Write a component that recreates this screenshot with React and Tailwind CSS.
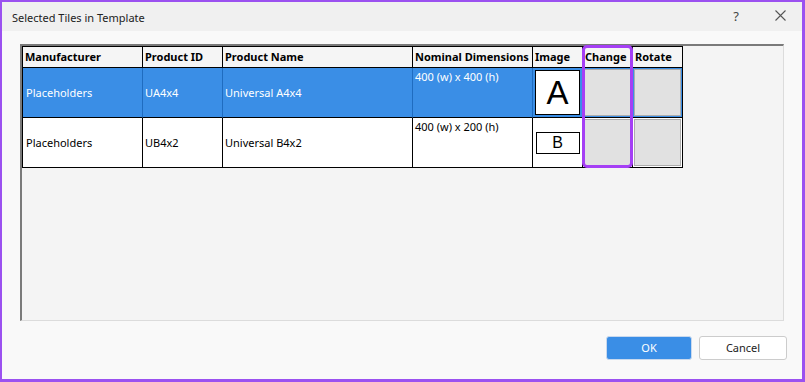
import React from "react";

const cols = [
  { key: "m", label: "Manufacturer", w: "w-[120px]" },
  { key: "p", label: "Product ID", w: "w-[80px]" },
  { key: "n", label: "Product Name", w: "w-[190px]" },
  { key: "d", label: "Nominal Dimensions", w: "w-[120px]" },
  { key: "i", label: "Image", w: "w-[50px]" },
  { key: "c", label: "Change", w: "w-[50px]" },
  { key: "r", label: "Rotate", w: "w-[50px]" },
];

const rows = [
  { m: "Placeholders", p: "UA4x4", n: "Universal A4x4", d: "400 (w) x 400 (h)", img: "A", sel: true },
  { m: "Placeholders", p: "UB4x2", n: "Universal B4x2", d: "400 (w) x 200 (h)", img: "B", sel: false },
];

function Row({ r }) {
  const sep = r.sel ? "border-r-[#1f6cc0]" : "border-r-black";
  const bg = r.sel ? "bg-[#3a8ee6] text-white" : "bg-white text-black";
  const cell = `h-[50px] border-r border-b border-b-black ${sep} shrink-0`;
  return (
    <div className={`flex ${bg}`}>
      <div className={`${cell} w-[120px] flex items-center pl-[3px]`}>{r.m}</div>
      <div className={`${cell} w-[80px] flex items-center pl-[2px]`}>{r.p}</div>
      <div className={`${cell} w-[190px] flex items-center pl-[2px]`}>{r.n}</div>
      <div className={`${cell} w-[120px] pl-[2px] pt-[1px]`}>{r.d}</div>
      <div className={`${cell} w-[50px] flex items-center justify-center`}>
        {r.img === "A" ? (
          <div className="w-[45px] h-[45px] bg-white border border-black flex items-center justify-center text-black text-[33px] leading-none font-['Liberation_Sans',Arial,sans-serif]">
            A
          </div>
        ) : (
          <div className="w-[44px] h-[22px] bg-white border border-black flex items-center justify-center text-black text-[16px] leading-none font-['Liberation_Sans',Arial,sans-serif]">
            B
          </div>
        )}
      </div>
      <div className={`${cell} w-[50px] p-[1px]`}>
        <div className="w-full h-full bg-[#e1e1e1] border border-[#adadad]" />
      </div>
      <div className={`h-[50px] border-r border-b border-black shrink-0 w-[50px] p-[1px]`}>
        <div className="w-full h-full bg-[#e1e1e1] border border-[#adadad]" />
      </div>
    </div>
  );
}

export default function App() {
  return (
    <div className="w-[805px] h-[382px] bg-[#9b51f0] pl-[2px] pt-[2px] pr-[3px] pb-[3px] font-['Noto_Sans',sans-serif] text-[11px]">
      <div className="w-full h-full flex flex-col bg-[#f9f9f9]">
        <div className="h-[29px] bg-[#f0f0f0] flex items-center pl-[10px] pr-[16px] shrink-0">
          <span className="text-[#222] text-[11px] pt-[3px]">Selected Tiles in Template</span>
          <span className="ml-auto text-[#444] text-[13px] mr-[36px]">?</span>
          <svg width="11" height="11" viewBox="0 0 11 11" className="mt-[-2px]">
            <path d="M0.5 0.5 L10.5 10.5 M10.5 0.5 L0.5 10.5" stroke="#555" strokeWidth="1.1" fill="none" />
          </svg>
        </div>
        <div className="mt-[13px] mx-[18px] h-[277px] bg-[#f4f4f4] border-t-2 border-l-2 border-t-[#7a7a7a] border-l-[#7a7a7a] border-r border-b border-r-[#dcdcdc] border-b-[#dcdcdc] shrink-0">
          <div className="relative w-[661px] border-l border-t border-black leading-[16px]">
            <div className="flex bg-[#f5f5f5] text-black font-bold">
              {cols.map((c) => (
                <div
                  key={c.key}
                  className={`${c.w} h-[21px] border-r border-b border-black flex items-center pl-[2px] shrink-0 whitespace-nowrap overflow-hidden`}
                >
                  {c.label}
                </div>
              ))}
            </div>
            {rows.map((r, i) => (
              <Row key={i} r={r} />
            ))}
            <div className="absolute left-[559px] top-[-2px] w-[51px] h-[123px] border-[3px] border-[#a53ff5] rounded-[5px] pointer-events-none" />
          </div>
        </div>
        <div className="flex justify-end gap-[7px] mt-[15px] mr-[15px]">
          <button className="w-[86px] h-[24px] bg-[#3a8ee6] text-white border border-[#c9d9ee] rounded-[3px] text-[11px]">
            OK
          </button>
          <button className="w-[88px] h-[24px] bg-white text-[#222] border border-[#cccccc] rounded-[3px] text-[11px]">
            Cancel
          </button>
        </div>
      </div>
    </div>
  );
}
